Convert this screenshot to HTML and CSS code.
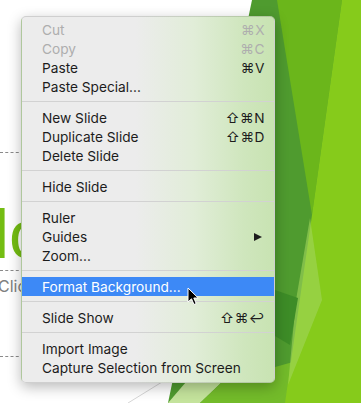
FILE: index.html
```html
<!DOCTYPE html>
<html lang="en">
<head>
    <meta charset="UTF-8">
    <title>Context menu</title>
    <link rel="stylesheet" href="styles.css">
</head>
<body>
    <div class="slide">
        <svg class="backdrop" width="361" height="403" viewBox="0 0 361 403">
            <rect width="361" height="403" fill="#ffffff"/>
            <line x1="128" y1="403" x2="162" y2="382" stroke="#d6d6d6" stroke-width="1"/>
            <polygon points="252,0 361,0 361,403 168,403" fill="#4f9b2f"/>
            <polygon points="168,403 200,403 222,382 186,382" fill="#c4e39c"/>
            <polygon points="200,403 290,403 300,360 222,382" fill="#73bb2a"/>
            <polygon points="277,0 342,0 312,215" fill="#6bb61b"/>
            <polygon points="342,0 361,0 361,403 285,403 312,215" fill="#86cb1b"/>
            <polygon points="310,218 322,300 288,385 296,300" fill="#a2d65c" opacity="0.6"/>
            <polygon points="275,290 298,298 290,345 275,336" fill="#3d8c27"/>
        </svg>
        <div class="dots dots-1"></div>
        <div class="title-frag">lo</div>
        <div class="dots dots-2"></div>
        <div class="sub-frag">Clic</div>
        <div class="dots dots-3"></div>
    </div>

    <div class="menu">
        <div class="item disabled"><span>Cut</span><span class="key">⌘X</span></div>
        <div class="item disabled"><span>Copy</span><span class="key">⌘C</span></div>
        <div class="item"><span>Paste</span><span class="key">⌘V</span></div>
        <div class="item"><span>Paste Special...</span></div>
        <div class="sep"></div>
        <div class="item"><span>New Slide</span><span class="key">⇧⌘N</span></div>
        <div class="item"><span>Duplicate Slide</span><span class="key">⇧⌘D</span></div>
        <div class="item"><span>Delete Slide</span></div>
        <div class="sep"></div>
        <div class="item"><span>Hide Slide</span></div>
        <div class="sep"></div>
        <div class="item"><span>Ruler</span></div>
        <div class="item"><span>Guides</span><span class="arrow"></span></div>
        <div class="item"><span>Zoom...</span></div>
        <div class="sep"></div>
        <div class="item active"><span>Format Background...</span></div>
        <div class="sep"></div>
        <div class="item"><span>Slide Show</span><span class="key">⇧⌘↩</span></div>
        <div class="sep"></div>
        <div class="item"><span>Import Image</span></div>
        <div class="item"><span>Capture Selection from Screen</span></div>
    </div>

    <svg class="cursor" width="14" height="20" viewBox="0 0 14 20">
        <path d="M1,1 L1,15 L4.5,11.8 L7,17.5 L9.2,16.5 L6.8,11 L11.2,11 Z" fill="#000" stroke="#fff" stroke-width="1"/>
    </svg>
</body>
</html>
```

FILE: styles.css
```css
body {
    margin: 0;
    font-family: "Inter", "Liberation Sans", sans-serif;
    overflow: hidden;
}
.slide {
    position: relative;
    width: 361px;
    height: 403px;
    overflow: hidden;
}
.backdrop {
    position: absolute;
    left: 0;
    top: 0;
}
.dots {
    position: absolute;
    left: 0;
    width: 24px;
    border-top: 1px dashed #8a8a8a;
}
.dots-1 { top: 152px; }
.dots-2 { top: 270px; }
.dots-3 { top: 356px; }
.title-frag {
    position: absolute;
    left: -6px;
    top: 194px;
    width: 27px;
    overflow: hidden;
    font-family: "Liberation Sans", sans-serif;
    font-size: 68px;
    line-height: 80px;
    color: #74bd12;
}
.sub-frag {
    position: absolute;
    left: -2px;
    top: 277px;
    width: 23px;
    overflow: hidden;
    font-size: 16px;
    line-height: 18px;
    color: #808080;
}
.menu {
    position: absolute;
    left: 21px;
    top: 16px;
    width: 254px;
    box-sizing: border-box;
    padding: 3px 0 5px;
    border-radius: 5px;
    border: 1px solid rgba(0, 0, 0, 0.12);
    background: linear-gradient(to right, #ececec 0%, #ececec 45%, #e1edd8 68%, #cfe6bd 88%, #c8e3b2 100%);
    box-shadow: 0 4px 14px rgba(0, 0, 0, 0.28);
    font-size: 13.7px;
    color: #1c1c1c;
}
.item {
    display: flex;
    justify-content: space-between;
    align-items: center;
    height: 19px;
    padding: 0 9px 0 20px;
}
.item.disabled { color: #aeaeae; }
.item.active {
    background: #3d89f6;
    color: #ffffff;
}
.key {
    font-family: "Inter", "DejaVu Sans", sans-serif;
    letter-spacing: 0.5px;
}
.arrow {
    width: 0;
    height: 0;
    margin-right: 3px;
    border-top: 4.5px solid transparent;
    border-bottom: 4.5px solid transparent;
    border-left: 8px solid #1c1c1c;
}
.sep {
    height: 1px;
    margin: 5px 0 6px;
    background: #d2d2d2;
}
.cursor {
    position: absolute;
    left: 187px;
    top: 287px;
}
```
